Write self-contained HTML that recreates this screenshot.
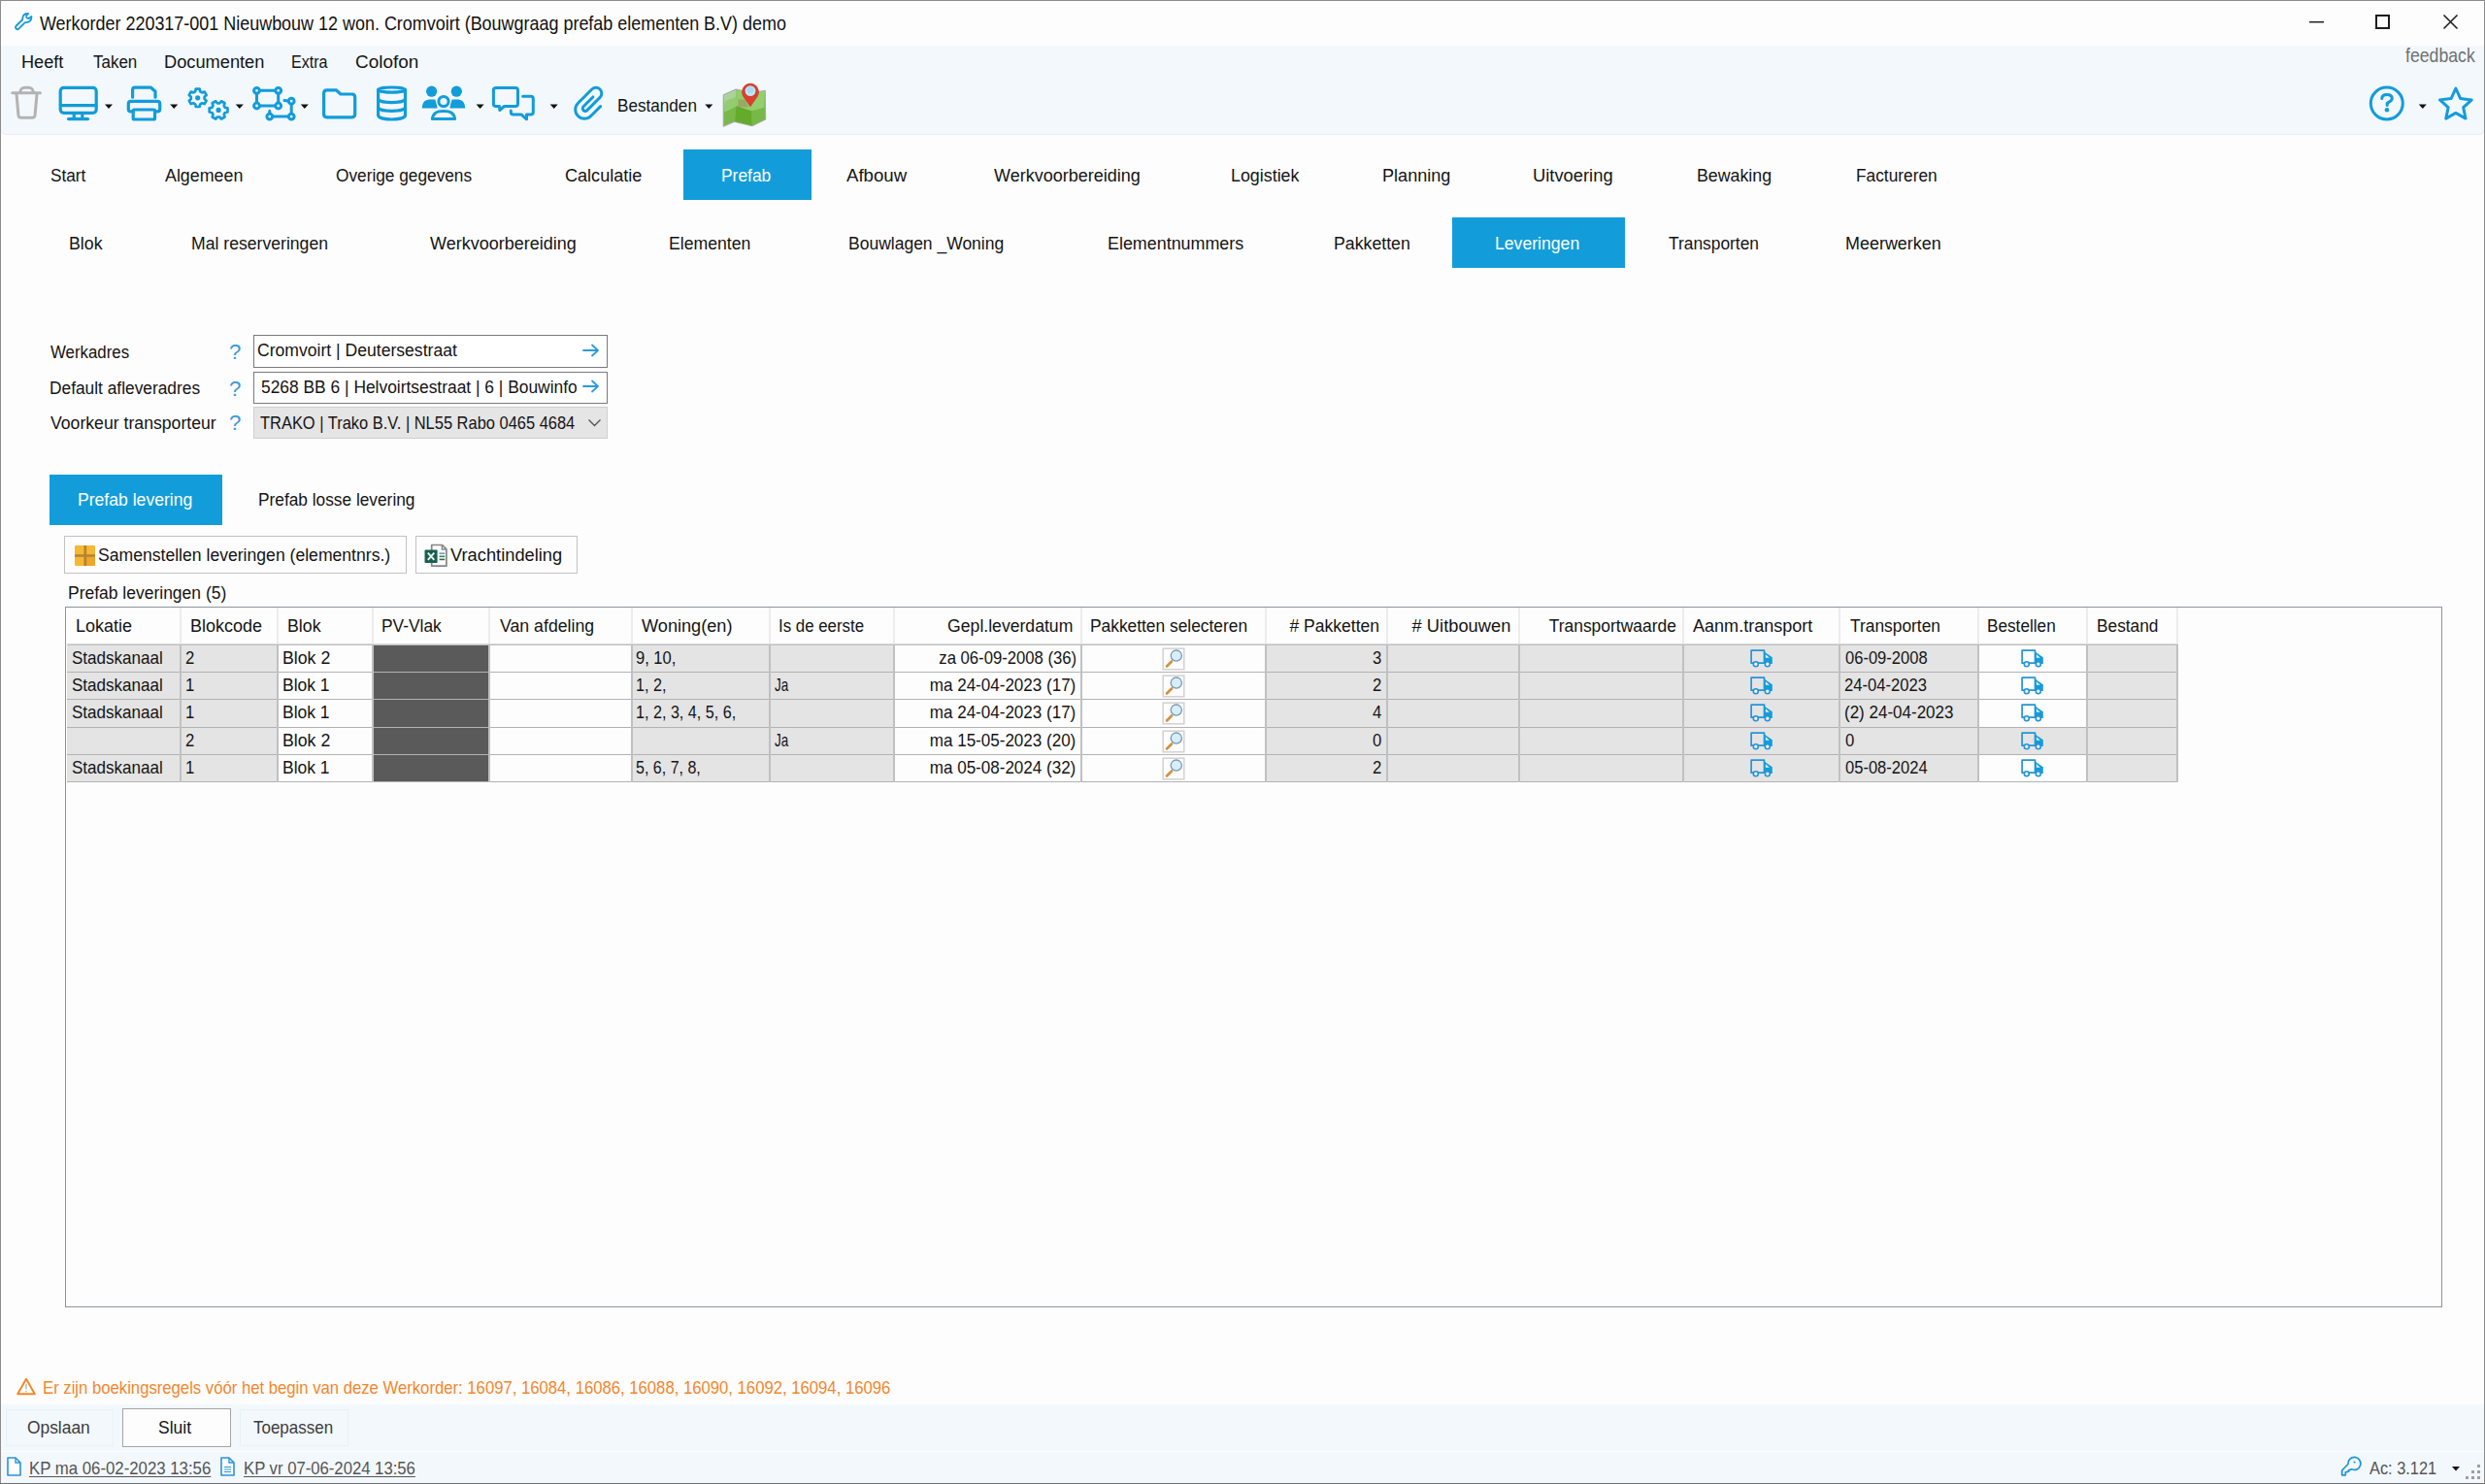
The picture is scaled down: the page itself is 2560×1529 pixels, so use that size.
<!DOCTYPE html>
<html><head><meta charset="utf-8">
<style>
*{margin:0;padding:0;box-sizing:border-box}
html,body{width:2560px;height:1529px;overflow:hidden;background:#fdfdfd;font-family:"Liberation Sans",sans-serif;color:#141414}
.a{position:absolute}
.t{position:absolute;white-space:nowrap;font-size:17.4px;line-height:20px}
svg{position:absolute;overflow:visible}
.ic{fill:none;stroke:#1a9bd8;stroke-width:3;stroke-linecap:round;stroke-linejoin:round}
.dd{position:absolute;width:0;height:0;border-left:4px solid transparent;border-right:4px solid transparent;border-top:5px solid #111}
</style></head>
<body>
<div class="a" style="left:0px;top:0px;width:2560px;height:1px;background:#8c8c8c;"></div>
<div class="a" style="left:0px;top:0px;width:1px;height:1529px;background:#8c8c8c;"></div>
<div class="a" style="left:2559px;top:0px;width:1px;height:1529px;background:#8c8c8c;"></div>
<div class="a" style="left:0px;top:1528px;width:2560px;height:1px;background:#6e6e6e;"></div>
<svg style="left:0px;top:0px" width="40" height="40" viewBox="0 0 40 40"><path d="M29.1 14 C26 13.6 23.3 15.5 23.2 19 L23.2 20.2 L16.8 26.5 C15.5 27.8 16 29.5 17.3 30 C18 30.4 18.8 30.2 19.3 29.7 L25.6 23.3 C26 23 26.4 23.1 27 23.1 C30.4 23 32.7 20.4 32.4 16.9 L29.9 18.8 C28.8 19.4 27.3 18.5 27.1 17.2 C27 16.3 27.4 15.3 29.1 14 Z" fill="none" stroke="#1a9bd8" stroke-width="1.9" stroke-linejoin="round"/></svg>
<div class="t" style="left:41.00px;top:14.04px;transform-origin:0 0;font-size:19.80px;transform:scaleX(0.9074);color:#111">Werkorder 220317-001 Nieuwbouw 12 won. Cromvoirt (Bouwgraag prefab elementen B.V) demo</div>
<div class="a" style="left:2379px;top:22px;width:15px;height:1px;background:#1a1a1a;"></div>
<div class="a" style="left:2379px;top:23px;width:15px;height:1px;background:#9a9a9a;"></div>
<div class="a" style="left:2447px;top:15px;width:15px;height:15px;border:2px solid #1e1e1e"></div>
<svg style="left:2517px;top:15px" width="15" height="15" viewBox="0 0 15 15"><path d="M0.5 0.5 L14.5 14.5 M14.5 0.5 L0.5 14.5" stroke="#1a1a1a" stroke-width="1.5" fill="none"/></svg>
<div class="a" style="left:1px;top:47px;width:2558px;height:91px;background:#f3f8fc;border-radius:0 0 5px 5px;box-shadow:0 1px 0 #ececec"></div>
<div class="t" style="left:22.05px;top:53.67px;transform-origin:0 0;font-size:19.14px;transform:scaleX(0.9489)">Heeft</div>
<div class="t" style="left:96.00px;top:53.67px;transform-origin:0 0;font-size:19.14px;transform:scaleX(0.8880)">Taken</div>
<div class="t" style="left:169.05px;top:53.67px;transform-origin:0 0;font-size:19.14px;transform:scaleX(0.9533)">Documenten</div>
<div class="t" style="left:300.16px;top:53.67px;transform-origin:0 0;font-size:19.14px;transform:scaleX(0.8409)">Extra</div>
<div class="t" style="left:366.01px;top:53.67px;transform-origin:0 0;font-size:19.14px;transform:scaleX(0.9891)">Colofon</div>
<div class="t" style="left:2478.00px;top:46.72px;transform-origin:0 0;font-size:19.58px;transform:scaleX(0.9025);color:#707070">feedback</div>
<svg style="left:0;top:0" width="2560" height="1529" viewBox="0 0 2560 1529"><g fill="none" stroke="#b3b3b3" stroke-width="3" stroke-linecap="round" stroke-linejoin="round"><path d="M12.8 95.8 L41.5 95.8"/><path d="M20.5 95.5 C21.5 91 23 90.3 25.5 90.3 L29.5 90.3 C32 90.3 33.5 91 34.5 95.5"/><path d="M17 97 L19 119 C19.3 121 20 121.3 22 121.3 L33 121.3 C35 121.3 35.7 121 36 119 L38 97"/></g><g fill="none" stroke="#129cda" stroke-width="3.2" stroke-linecap="round" stroke-linejoin="round"><rect x="62.2" y="90.3" width="37" height="26" rx="3.5"/><path d="M62.5 108.6 L99 108.6"/><path d="M76.2 117 L76.2 121.5 M84.8 117 L84.8 121.5"/><path d="M70.5 122.6 L90.5 122.6"/><path d="M136.6 100.2 L136.6 92.8 C136.6 91 137.3 90.2 139 90.2 L155.5 90.2 L160 94.2 L160 100.2"/><path d="M137 114.8 L134.5 114.8 C133.2 114.8 132.3 114 132.3 112.5 L132.3 107 C132.3 105.3 133.3 104.4 135 104.4 L162 104.4 C163.8 104.4 164.7 105.3 164.7 107 L164.7 112.5 C164.7 114 163.8 114.8 162.3 114.8 L159.5 114.8"/><rect x="137.2" y="113" width="22.3" height="10" rx="1"/><path stroke-width="2.7" d="M201.19 94.26 L201.75 91.61 L205.65 91.61 L206.21 94.26 L208.11 95.36 L210.69 94.51 L212.64 97.90 L210.61 99.70 L210.61 101.90 L212.64 103.70 L210.69 107.09 L208.11 106.24 L206.21 107.34 L205.65 109.99 L201.75 109.99 L201.19 107.34 L199.29 106.24 L196.71 107.09 L194.76 103.70 L196.79 101.90 L196.79 99.70 L194.76 97.90 L196.71 94.51 L199.29 95.36 Z"/><circle cx="203.7" cy="100.8" r="2.6" fill="#129cda" stroke="none"/><path stroke-width="2.7" d="M231.82 110.82 L234.49 111.40 L234.49 115.40 L231.82 115.98 L230.70 117.93 L231.52 120.53 L228.07 122.53 L226.23 120.51 L223.97 120.51 L222.13 122.53 L218.68 120.53 L219.50 117.93 L218.38 115.98 L215.71 115.40 L215.71 111.40 L218.38 110.82 L219.50 108.87 L218.68 106.27 L222.13 104.27 L223.97 106.29 L226.23 106.29 L228.07 104.27 L231.52 106.27 L230.70 108.87 Z"/><circle cx="225.1" cy="113.4" r="2.6" fill="#129cda" stroke="none"/><g stroke-width="3"><circle cx="264.5" cy="93.3" r="2.9"/><circle cx="286.7" cy="93.3" r="2.9"/><circle cx="264.5" cy="109" r="2.9"/><circle cx="286.7" cy="109" r="2.9"/><path d="M268 93.3 L283.2 93.3 M268 109 L283.2 109 M264.5 96.8 L264.5 105.5 M286.7 96.8 L286.7 105.5"/><circle cx="300.2" cy="104.2" r="2.9"/><circle cx="300.2" cy="120.1" r="2.9"/><circle cx="277.8" cy="120.1" r="2.9"/><path d="M300.2 107.6 L300.2 116.7 M281.2 120.1 L296.8 120.1 M277.8 116.5 L277.8 114.3 M296.5 104 L293 103.5"/></g><path d="M333.6 117.5 L333.6 96 C333.6 93.8 334.6 92.8 336.8 92.8 L346.5 92.8 L351 97 L362.5 97 C364.7 97 365.7 98 365.7 100.2 L365.7 117.6 C365.7 119.8 364.7 120.8 362.5 120.8 L336.8 120.8 C334.6 120.8 333.6 119.8 333.6 117.5 Z"/><path d="M389.6 92.6 L389.6 118.5 C389.6 121.5 396 123 403.5 123 C411 123 417.5 121.5 417.5 118.5 L417.5 92.6"/><ellipse cx="403.55" cy="92.6" rx="13.95" ry="2.6"/><path d="M389.6 101.8 C389.6 104.3 396 105.6 403.5 105.6 C411 105.6 417.5 104.3 417.5 101.8"/><path d="M389.6 110.5 C389.6 113 396 114.3 403.5 114.3 C411 114.3 417.5 113 417.5 110.5"/><circle cx="457" cy="104.5" r="5.1" stroke-width="3"/><path d="M445.3 122.5 C446.5 116.5 449.5 114.5 457 114.5 C464.5 114.5 467.5 116.5 468.6 122.5 Z" stroke-width="3"/></g><g fill="#129cda"><circle cx="444.6" cy="94.2" r="5.6"/><circle cx="470.3" cy="94.2" r="5.6"/><path d="M434.8 111.5 C435.3 104.5 438.3 102.6 443.5 102.6 L448.5 102.6 C448.5 104 450.5 109 450.5 111.5 Z"/><path d="M479.2 111.5 C478.7 104.5 475.7 102.6 470.5 102.6 L465.5 102.6 C465.5 104 463.5 109 463.5 111.5 Z"/></g><g fill="none" stroke="#129cda" stroke-width="3" stroke-linecap="round" stroke-linejoin="round"><path d="M511 109.5 C509.3 109.5 508.4 108.6 508.4 107 L508.4 93 C508.4 91.3 509.3 90.4 511 90.4 L531 90.4 C532.6 90.4 533.5 91.3 533.5 93 L533.5 107 C533.5 108.6 532.6 109.5 531 109.5 L519.5 109.5 L514.8 113.5 L514.5 109.5 Z"/><path d="M538.6 99.3 L546.8 99.3 C548.4 99.3 549.3 100.2 549.3 101.8 L549.3 115.6 C549.3 117.2 548.4 118.1 546.8 118.1 L542.5 118.1 L542.5 122.8 L537.2 118.1 L528.8 118.1 C527.2 118.1 526.3 117.2 526.3 115.6 L526.3 114"/><path transform="translate(609 106) rotate(45)" d="M-2.95 -5.6 L-2.95 8.3 A2.7 2.7 0 0 0 2.45 8.3 L2.45 -10.4 A5.9 5.9 0 0 0 -9.35 -10.4 L-9.35 9.75 A9.35 9.35 0 0 0 9.35 9.75 L9.35 -4.2"/></g><path d="M108 107.5 L116 107.5 L112 112.1 Z" fill="#111"/><path d="M175.2 107.5 L183.2 107.5 L179.2 112.1 Z" fill="#111"/><path d="M242.8 107.5 L250.8 107.5 L246.8 112.1 Z" fill="#111"/><path d="M309.8 107.5 L317.8 107.5 L313.8 112.1 Z" fill="#111"/><path d="M490.6 107.5 L498.6 107.5 L494.6 112.1 Z" fill="#111"/><path d="M566.7 107.5 L574.7 107.5 L570.7 112.1 Z" fill="#111"/><path d="M726.3 107.5 L734.3 107.5 L730.3 112.1 Z" fill="#111"/><path d="M2491.8 107.5 L2499.8 107.5 L2495.8 112.1 Z" fill="#111"/><g><path d="M745.3 97.8 L758.2 92.1 L774 95.8 L788.2 93.3 L788.6 122.9 L774.8 129.7 L757 125.3 L745.3 130.1 Z" fill="#79b84a" stroke="#a9a9a9" stroke-width="1.2" stroke-linejoin="round"/><path d="M745.6 98 L758.2 92.4 L758.4 109.3 L746.6 115.2 Z" fill="#a9d39b"/><path d="M746.8 104 L758.2 100 L758.6 109.2 L746.6 115.2 Z" fill="#93cd70"/><path d="M758.2 92.4 L774 96 L774.2 114.4 L758.6 109.2 Z" fill="#92cd6d"/><path d="M760.3 102.6 L768 102.6 L771 110.5 L760.3 110 Z" fill="#98a962"/><path d="M774 96 L788 93.5 L787.2 111.1 L774.2 114.4 Z" fill="#93cf6e"/><path d="M758.6 109.2 L774.2 114.4 L774.8 129.5 L757.2 125.2 Z" fill="#66aa2c"/><path d="M774.2 114.4 L787.2 111.1 L788.4 122.7 L774.8 129.5 Z" fill="#78b849"/><path d="M773 110.2 L765.5 99.5 A8.9 8.9 0 1 1 780.5 99.5 Z" fill="#d8402f"/><circle cx="773" cy="93.6" r="5.4" fill="#bfe6f7"/><circle cx="773" cy="92.5" r="3.5" fill="#a8dcf5"/></g><g fill="none" stroke="#129cda" stroke-width="3"><circle cx="2458.8" cy="106.5" r="16.5"/></g><path d="M2453.8 101.6 C2453.8 98.8 2456 97.6 2459 97.6 C2462.2 97.6 2464.3 99 2464.3 101.6 C2464.3 104 2461.5 104.8 2459.2 106.2 L2459.2 108.4" fill="none" stroke="#129cda" stroke-width="3" stroke-linecap="round" stroke-linejoin="round"/><circle cx="2459" cy="113.3" r="2.3" fill="#129cda"/><path d="M2529.90 91.00 L2534.72 101.57 L2546.26 102.88 L2537.70 110.73 L2540.01 122.12 L2529.90 116.40 L2519.79 122.12 L2522.10 110.73 L2513.54 102.88 L2525.08 101.57 Z" fill="none" stroke="#129cda" stroke-width="3" stroke-linejoin="round"/></svg>
<div class="t" style="left:635.60px;top:98.97px;transform-origin:0 0;font-size:19.14px;transform:scaleX(0.8956)">Bestanden</div>
<div class="a" style="left:704px;top:154px;width:132px;height:52px;background:#129dda;"></div>
<div class="t" style="left:51.90px;top:171.47px;transform-origin:0 0;font-size:19.14px;transform:scaleX(0.9000)">Start</div>
<div class="t" style="left:170.00px;top:171.47px;transform-origin:0 0;font-size:19.14px;transform:scaleX(0.9329)">Algemeen</div>
<div class="t" style="left:345.50px;top:171.47px;transform-origin:0 0;font-size:19.14px;transform:scaleX(0.9026)">Overige gegevens</div>
<div class="t" style="left:581.55px;top:171.47px;transform-origin:0 0;font-size:19.14px;transform:scaleX(0.9451)">Calculatie</div>
<div class="t" style="left:743.09px;top:171.47px;transform-origin:0 0;font-size:19.14px;transform:scaleX(0.9091);color:#fff">Prefab</div>
<div class="t" style="left:871.90px;top:171.47px;transform-origin:0 0;font-size:19.14px;transform:scaleX(0.9734)">Afbouw</div>
<div class="t" style="left:1023.80px;top:171.47px;transform-origin:0 0;font-size:19.14px;transform:scaleX(0.9409)">Werkvoorbereiding</div>
<div class="t" style="left:1267.97px;top:171.47px;transform-origin:0 0;font-size:19.14px;transform:scaleX(0.9333)">Logistiek</div>
<div class="t" style="left:1423.65px;top:171.47px;transform-origin:0 0;font-size:19.14px;transform:scaleX(0.9452)">Planning</div>
<div class="t" style="left:1579.04px;top:171.47px;transform-origin:0 0;font-size:19.14px;transform:scaleX(0.9595)">Uitvoering</div>
<div class="t" style="left:1747.57px;top:171.47px;transform-origin:0 0;font-size:19.14px;transform:scaleX(0.9296)">Bewaking</div>
<div class="t" style="left:1912.30px;top:171.47px;transform-origin:0 0;font-size:19.14px;transform:scaleX(0.9044)">Factureren</div>
<div class="a" style="left:1496px;top:224px;width:178px;height:52px;background:#129dda;"></div>
<div class="t" style="left:70.67px;top:241.47px;transform-origin:0 0;font-size:19.14px;transform:scaleX(0.9278)">Blok</div>
<div class="t" style="left:197.38px;top:241.47px;transform-origin:0 0;font-size:19.14px;transform:scaleX(0.9212)">Mal reserveringen</div>
<div class="t" style="left:443.00px;top:241.47px;transform-origin:0 0;font-size:19.14px;transform:scaleX(0.9409)">Werkvoorbereiding</div>
<div class="t" style="left:688.58px;top:241.47px;transform-origin:0 0;font-size:19.14px;transform:scaleX(0.9222)">Elementen</div>
<div class="t" style="left:874.08px;top:241.47px;transform-origin:0 0;font-size:19.14px;transform:scaleX(0.9150)">Bouwlagen _Woning</div>
<div class="t" style="left:1141.36px;top:241.47px;transform-origin:0 0;font-size:19.14px;transform:scaleX(0.9356)">Elementnummers</div>
<div class="t" style="left:1374.07px;top:241.47px;transform-origin:0 0;font-size:19.14px;transform:scaleX(0.9265)">Pakketten</div>
<div class="t" style="left:1540.38px;top:241.47px;transform-origin:0 0;font-size:19.14px;transform:scaleX(0.9215);color:#fff">Leveringen</div>
<div class="t" style="left:1719.30px;top:241.47px;transform-origin:0 0;font-size:19.14px;transform:scaleX(0.9078)">Transporten</div>
<div class="t" style="left:1901.36px;top:241.47px;transform-origin:0 0;font-size:19.14px;transform:scaleX(0.9388)">Meerwerken</div>
<div class="t" style="left:52.00px;top:352.77px;transform-origin:0 0;font-size:19.14px;transform:scaleX(0.8804)">Werkadres</div>
<div class="t" style="left:51.09px;top:389.97px;transform-origin:0 0;font-size:19.14px;transform:scaleX(0.9059)">Default afleveradres</div>
<div class="t" style="left:52.00px;top:425.87px;transform-origin:0 0;font-size:19.14px;transform:scaleX(0.9227)">Voorkeur transporteur</div>
<div class="t" style="left:235.56px;top:353.37px;transform-origin:0 0;font-size:21.45px;transform:scaleX(1.0364);color:#3d9ad6">?</div>
<div class="t" style="left:235.56px;top:390.57px;transform-origin:0 0;font-size:21.45px;transform:scaleX(1.0364);color:#3d9ad6">?</div>
<div class="t" style="left:235.56px;top:426.47px;transform-origin:0 0;font-size:21.45px;transform:scaleX(1.0364);color:#3d9ad6">?</div>
<div class="a" style="left:261px;top:345px;width:365px;height:34px;border:1px solid #7a7a7a;background:#fff"></div>
<div class="a" style="left:261px;top:383px;width:365px;height:33px;border:1px solid #7a7a7a;background:#fff"></div>
<div class="a" style="left:261px;top:419px;width:365px;height:33px;border:1px solid #cfcfcf;background:#e5e5e5"></div>
<div class="t" style="left:264.68px;top:351.47px;transform-origin:0 0;font-size:19.14px;transform:scaleX(0.9193)">Cromvoirt | Deutersestraat</div>
<div class="a" style="left:270px;top:386px;width:324px;height:28px;overflow:hidden"><div class="t" style="left:-0.91px;top:2.57px;transform-origin:0 0;font-size:19.14px;transform:scaleX(0.9091)">5268 BB 6 | Helvoirtsestraat | 6 | Bouwinfo</div>
</div>
<div class="t" style="left:267.60px;top:426.17px;transform-origin:0 0;font-size:18.26px;transform:scaleX(0.9011)">TRAKO | Trako B.V. | NL55 Rabo 0465 4684</div>
<svg style="left:600.5px;top:355px" width="16" height="12" viewBox="0 0 16 12"><path d="M0 6 L15 6 M9 0.5 L15 6 L9 11.5" fill="none" stroke="#2b9bdb" stroke-width="1.8" stroke-linecap="round" stroke-linejoin="round"/></svg>
<svg style="left:600.5px;top:391.5px" width="16" height="12" viewBox="0 0 16 12"><path d="M0 6 L15 6 M9 0.5 L15 6 L9 11.5" fill="none" stroke="#2b9bdb" stroke-width="1.8" stroke-linecap="round" stroke-linejoin="round"/></svg>
<svg style="left:606px;top:431.5px" width="13" height="8" viewBox="0 0 13 8"><path d="M0.5 0.5 L6.5 6.5 L12.5 0.5" fill="none" stroke="#555" stroke-width="1.4"/></svg>
<div class="a" style="left:51px;top:489px;width:178px;height:52px;background:#129dda;"></div>
<div class="t" style="left:79.68px;top:505.27px;transform-origin:0 0;font-size:19.14px;transform:scaleX(0.9197);color:#fff">Prefab levering</div>
<div class="t" style="left:266.10px;top:505.27px;transform-origin:0 0;font-size:19.14px;transform:scaleX(0.9040)">Prefab losse levering</div>
<div class="a" style="left:66px;top:552px;width:353px;height:39px;border:1px solid #c2c2c2;background:#fdfdfd"></div>
<div class="a" style="left:428px;top:552px;width:167px;height:39px;border:1px solid #c2c2c2;background:#fdfdfd"></div>
<svg style="left:76.8px;top:561.6px" width="21" height="21" viewBox="0 0 21 21"><rect x="0" y="0" width="21" height="21" rx="1" fill="#f4b834"/><path d="M12 12 L21 12 L21 21 L12 21 Z" fill="#eca72c"/><path d="M10.8 0 L10.8 21 M0 10.5 L21 10.5" stroke="#b5832f" stroke-width="2.7"/></svg>
<svg style="left:436.5px;top:559.5px" width="25" height="25" viewBox="0 0 25 25"><path d="M7.7 1.5 L18.6 1.5 L22.9 5.8 L22.9 23.1 L7.7 23.1 Z" fill="#fafcfe" stroke="#868686" stroke-width="1.7" stroke-linejoin="round"/><path d="M18.4 1.8 L18.4 5.9 L22.6 5.9" fill="none" stroke="#868686" stroke-width="1.5"/><path d="M15.6 10.2 L21.2 10.2" stroke="#6a9fbf" stroke-width="1.6"/><path d="M15.6 13.3 L21.2 13.3" stroke="#2e8b57" stroke-width="1.6"/><path d="M15.6 16.4 L21.2 16.4" stroke="#3d6b4a" stroke-width="1.6"/><rect x="0.5" y="6.5" width="13.1" height="13.5" rx="1" fill="#18604f"/><path d="M3.8 9.6 L10.3 16.9 M10.3 9.6 L3.8 16.9" stroke="#eef6f0" stroke-width="1.9"/></svg>
<div class="t" style="left:101.38px;top:561.77px;transform-origin:0 0;font-size:19.14px;transform:scaleX(0.9199)">Samenstellen leveringen (elementnrs.)</div>
<div class="t" style="left:463.70px;top:561.77px;transform-origin:0 0;font-size:19.14px;transform:scaleX(0.9558)">Vrachtindeling</div>
<div class="t" style="left:70.49px;top:601.07px;transform-origin:0 0;font-size:19.14px;transform:scaleX(0.9141)">Prefab leveringen (5)</div>
<div class="a" style="left:67px;top:625px;width:2449px;height:722px;border:1px solid #8f949a;background:#fdfdfd"></div>
<div class="a" style="left:185px;top:626px;width:2px;height:37px;background:#ececee;"></div>
<div class="a" style="left:285px;top:626px;width:2px;height:37px;background:#ececee;"></div>
<div class="a" style="left:383px;top:626px;width:2px;height:37px;background:#ececee;"></div>
<div class="a" style="left:503px;top:626px;width:2px;height:37px;background:#ececee;"></div>
<div class="a" style="left:650px;top:626px;width:2px;height:37px;background:#ececee;"></div>
<div class="a" style="left:792px;top:626px;width:2px;height:37px;background:#ececee;"></div>
<div class="a" style="left:920px;top:626px;width:2px;height:37px;background:#ececee;"></div>
<div class="a" style="left:1113px;top:626px;width:2px;height:37px;background:#ececee;"></div>
<div class="a" style="left:1303px;top:626px;width:2px;height:37px;background:#ececee;"></div>
<div class="a" style="left:1428px;top:626px;width:2px;height:37px;background:#ececee;"></div>
<div class="a" style="left:1564px;top:626px;width:2px;height:37px;background:#ececee;"></div>
<div class="a" style="left:1733px;top:626px;width:2px;height:37px;background:#ececee;"></div>
<div class="a" style="left:1894px;top:626px;width:2px;height:37px;background:#ececee;"></div>
<div class="a" style="left:2037px;top:626px;width:2px;height:37px;background:#ececee;"></div>
<div class="a" style="left:2149px;top:626px;width:2px;height:37px;background:#ececee;"></div>
<div class="a" style="left:2242px;top:626px;width:2px;height:37px;background:#ececee;"></div>
<div class="a" style="left:69px;top:663px;width:2175px;height:1px;background:#dadada;"></div>
<div class="a" style="left:69px;top:664px;width:2175px;height:1px;background:#c0c0c0;"></div>
<div class="a" style="left:69px;top:665px;width:117px;height:27px;background:#e4e4e4;"></div>
<div class="a" style="left:186px;top:665px;width:100px;height:27px;background:#e4e4e4;"></div>
<div class="a" style="left:286px;top:665px;width:98px;height:27px;background:#fdfdfd;"></div>
<div class="a" style="left:384px;top:665px;width:120px;height:27px;background:#5a5a5a;"></div>
<div class="a" style="left:504px;top:665px;width:147px;height:27px;background:#fdfdfd;"></div>
<div class="a" style="left:651px;top:665px;width:142px;height:27px;background:#e4e4e4;"></div>
<div class="a" style="left:793px;top:665px;width:128px;height:27px;background:#e4e4e4;"></div>
<div class="a" style="left:921px;top:665px;width:193px;height:27px;background:#fdfdfd;"></div>
<div class="a" style="left:1114px;top:665px;width:190px;height:27px;background:#fdfdfd;"></div>
<div class="a" style="left:1304px;top:665px;width:125px;height:27px;background:#e4e4e4;"></div>
<div class="a" style="left:1429px;top:665px;width:136px;height:27px;background:#e4e4e4;"></div>
<div class="a" style="left:1565px;top:665px;width:169px;height:27px;background:#e4e4e4;"></div>
<div class="a" style="left:1734px;top:665px;width:161px;height:27px;background:#e4e4e4;"></div>
<div class="a" style="left:1895px;top:665px;width:143px;height:27px;background:#e4e4e4;"></div>
<div class="a" style="left:2038px;top:665px;width:112px;height:27px;background:#fdfdfd;"></div>
<div class="a" style="left:2150px;top:665px;width:93px;height:27px;background:#e4e4e4;"></div>
<div class="a" style="left:69px;top:692px;width:2175px;height:1px;background:#b2b2b2;"></div>
<div class="a" style="left:69px;top:693px;width:117px;height:27px;background:#e4e4e4;"></div>
<div class="a" style="left:186px;top:693px;width:100px;height:27px;background:#e4e4e4;"></div>
<div class="a" style="left:286px;top:693px;width:98px;height:27px;background:#fdfdfd;"></div>
<div class="a" style="left:384px;top:693px;width:120px;height:27px;background:#5a5a5a;"></div>
<div class="a" style="left:504px;top:693px;width:147px;height:27px;background:#fdfdfd;"></div>
<div class="a" style="left:651px;top:693px;width:142px;height:27px;background:#e4e4e4;"></div>
<div class="a" style="left:793px;top:693px;width:128px;height:27px;background:#e4e4e4;"></div>
<div class="a" style="left:921px;top:693px;width:193px;height:27px;background:#fdfdfd;"></div>
<div class="a" style="left:1114px;top:693px;width:190px;height:27px;background:#fdfdfd;"></div>
<div class="a" style="left:1304px;top:693px;width:125px;height:27px;background:#e4e4e4;"></div>
<div class="a" style="left:1429px;top:693px;width:136px;height:27px;background:#e4e4e4;"></div>
<div class="a" style="left:1565px;top:693px;width:169px;height:27px;background:#e4e4e4;"></div>
<div class="a" style="left:1734px;top:693px;width:161px;height:27px;background:#e4e4e4;"></div>
<div class="a" style="left:1895px;top:693px;width:143px;height:27px;background:#e4e4e4;"></div>
<div class="a" style="left:2038px;top:693px;width:112px;height:27px;background:#fdfdfd;"></div>
<div class="a" style="left:2150px;top:693px;width:93px;height:27px;background:#e4e4e4;"></div>
<div class="a" style="left:69px;top:720px;width:2175px;height:1px;background:#b2b2b2;"></div>
<div class="a" style="left:69px;top:721px;width:117px;height:28px;background:#e4e4e4;"></div>
<div class="a" style="left:186px;top:721px;width:100px;height:28px;background:#e4e4e4;"></div>
<div class="a" style="left:286px;top:721px;width:98px;height:28px;background:#fdfdfd;"></div>
<div class="a" style="left:384px;top:721px;width:120px;height:28px;background:#5a5a5a;"></div>
<div class="a" style="left:504px;top:721px;width:147px;height:28px;background:#fdfdfd;"></div>
<div class="a" style="left:651px;top:721px;width:142px;height:28px;background:#e4e4e4;"></div>
<div class="a" style="left:793px;top:721px;width:128px;height:28px;background:#e4e4e4;"></div>
<div class="a" style="left:921px;top:721px;width:193px;height:28px;background:#fdfdfd;"></div>
<div class="a" style="left:1114px;top:721px;width:190px;height:28px;background:#fdfdfd;"></div>
<div class="a" style="left:1304px;top:721px;width:125px;height:28px;background:#e4e4e4;"></div>
<div class="a" style="left:1429px;top:721px;width:136px;height:28px;background:#e4e4e4;"></div>
<div class="a" style="left:1565px;top:721px;width:169px;height:28px;background:#e4e4e4;"></div>
<div class="a" style="left:1734px;top:721px;width:161px;height:28px;background:#e4e4e4;"></div>
<div class="a" style="left:1895px;top:721px;width:143px;height:28px;background:#e4e4e4;"></div>
<div class="a" style="left:2038px;top:721px;width:112px;height:28px;background:#fdfdfd;"></div>
<div class="a" style="left:2150px;top:721px;width:93px;height:28px;background:#e4e4e4;"></div>
<div class="a" style="left:69px;top:749px;width:2175px;height:1px;background:#b2b2b2;"></div>
<div class="a" style="left:69px;top:750px;width:117px;height:27px;background:#e4e4e4;"></div>
<div class="a" style="left:186px;top:750px;width:100px;height:27px;background:#e4e4e4;"></div>
<div class="a" style="left:286px;top:750px;width:98px;height:27px;background:#fdfdfd;"></div>
<div class="a" style="left:384px;top:750px;width:120px;height:27px;background:#5a5a5a;"></div>
<div class="a" style="left:504px;top:750px;width:147px;height:27px;background:#fdfdfd;"></div>
<div class="a" style="left:651px;top:750px;width:142px;height:27px;background:#e4e4e4;"></div>
<div class="a" style="left:793px;top:750px;width:128px;height:27px;background:#e4e4e4;"></div>
<div class="a" style="left:921px;top:750px;width:193px;height:27px;background:#fdfdfd;"></div>
<div class="a" style="left:1114px;top:750px;width:190px;height:27px;background:#fdfdfd;"></div>
<div class="a" style="left:1304px;top:750px;width:125px;height:27px;background:#e4e4e4;"></div>
<div class="a" style="left:1429px;top:750px;width:136px;height:27px;background:#e4e4e4;"></div>
<div class="a" style="left:1565px;top:750px;width:169px;height:27px;background:#e4e4e4;"></div>
<div class="a" style="left:1734px;top:750px;width:161px;height:27px;background:#e4e4e4;"></div>
<div class="a" style="left:1895px;top:750px;width:143px;height:27px;background:#e4e4e4;"></div>
<div class="a" style="left:2038px;top:750px;width:112px;height:27px;background:#e4e4e4;"></div>
<div class="a" style="left:2150px;top:750px;width:93px;height:27px;background:#e4e4e4;"></div>
<div class="a" style="left:69px;top:777px;width:2175px;height:1px;background:#b2b2b2;"></div>
<div class="a" style="left:69px;top:778px;width:117px;height:27px;background:#e4e4e4;"></div>
<div class="a" style="left:186px;top:778px;width:100px;height:27px;background:#e4e4e4;"></div>
<div class="a" style="left:286px;top:778px;width:98px;height:27px;background:#fdfdfd;"></div>
<div class="a" style="left:384px;top:778px;width:120px;height:27px;background:#5a5a5a;"></div>
<div class="a" style="left:504px;top:778px;width:147px;height:27px;background:#fdfdfd;"></div>
<div class="a" style="left:651px;top:778px;width:142px;height:27px;background:#e4e4e4;"></div>
<div class="a" style="left:793px;top:778px;width:128px;height:27px;background:#e4e4e4;"></div>
<div class="a" style="left:921px;top:778px;width:193px;height:27px;background:#fdfdfd;"></div>
<div class="a" style="left:1114px;top:778px;width:190px;height:27px;background:#fdfdfd;"></div>
<div class="a" style="left:1304px;top:778px;width:125px;height:27px;background:#e4e4e4;"></div>
<div class="a" style="left:1429px;top:778px;width:136px;height:27px;background:#e4e4e4;"></div>
<div class="a" style="left:1565px;top:778px;width:169px;height:27px;background:#e4e4e4;"></div>
<div class="a" style="left:1734px;top:778px;width:161px;height:27px;background:#e4e4e4;"></div>
<div class="a" style="left:1895px;top:778px;width:143px;height:27px;background:#e4e4e4;"></div>
<div class="a" style="left:2038px;top:778px;width:112px;height:27px;background:#fdfdfd;"></div>
<div class="a" style="left:2150px;top:778px;width:93px;height:27px;background:#e4e4e4;"></div>
<div class="a" style="left:69px;top:805px;width:2175px;height:1px;background:#b2b2b2;"></div>
<div class="a" style="left:185px;top:664px;width:2px;height:142px;background:#bec1c3;"></div>
<div class="a" style="left:285px;top:664px;width:2px;height:142px;background:#bec1c3;"></div>
<div class="a" style="left:383px;top:664px;width:2px;height:142px;background:#bec1c3;"></div>
<div class="a" style="left:503px;top:664px;width:2px;height:142px;background:#bec1c3;"></div>
<div class="a" style="left:650px;top:664px;width:2px;height:142px;background:#bec1c3;"></div>
<div class="a" style="left:792px;top:664px;width:2px;height:142px;background:#bec1c3;"></div>
<div class="a" style="left:920px;top:664px;width:2px;height:142px;background:#bec1c3;"></div>
<div class="a" style="left:1113px;top:664px;width:2px;height:142px;background:#bec1c3;"></div>
<div class="a" style="left:1303px;top:664px;width:2px;height:142px;background:#bec1c3;"></div>
<div class="a" style="left:1428px;top:664px;width:2px;height:142px;background:#bec1c3;"></div>
<div class="a" style="left:1564px;top:664px;width:2px;height:142px;background:#bec1c3;"></div>
<div class="a" style="left:1733px;top:664px;width:2px;height:142px;background:#bec1c3;"></div>
<div class="a" style="left:1894px;top:664px;width:2px;height:142px;background:#bec1c3;"></div>
<div class="a" style="left:2037px;top:664px;width:2px;height:142px;background:#bec1c3;"></div>
<div class="a" style="left:2149px;top:664px;width:2px;height:142px;background:#bec1c3;"></div>
<div class="a" style="left:2242px;top:664px;width:2px;height:142px;background:#bec1c3;"></div>
<div class="t" style="left:77.86px;top:635.37px;transform-origin:0 0;font-size:19.14px;transform:scaleX(0.9417)">Lokatie</div>
<div class="t" style="left:196.06px;top:635.37px;transform-origin:0 0;font-size:19.14px;transform:scaleX(0.9403)">Blokcode</div>
<div class="t" style="left:295.67px;top:635.37px;transform-origin:0 0;font-size:19.14px;transform:scaleX(0.9278)">Blok</div>
<div class="t" style="left:393.09px;top:635.37px;transform-origin:0 0;font-size:19.14px;transform:scaleX(0.9075)">PV-Vlak</div>
<div class="t" style="left:514.60px;top:635.37px;transform-origin:0 0;font-size:19.14px;transform:scaleX(0.9260)">Van afdeling</div>
<div class="t" style="left:661.20px;top:635.37px;transform-origin:0 0;font-size:19.14px;transform:scaleX(0.9490)">Woning(en)</div>
<div class="t" style="left:802.12px;top:635.37px;transform-origin:0 0;font-size:19.14px;transform:scaleX(0.8816)">Is de eerste</div>
<div class="t" style="right:1454.90px;top:635.37px;transform-origin:100% 0;font-size:19.14px;transform:scaleX(0.9209)">Gepl.leverdatum</div>
<div class="t" style="left:1123.19px;top:635.37px;transform-origin:0 0;font-size:19.14px;transform:scaleX(0.9073)">Pakketten selecteren</div>
<div class="t" style="right:1139.07px;top:635.37px;transform-origin:100% 0;font-size:19.14px;transform:scaleX(0.9170)"># Pakketten</div>
<div class="t" style="right:1003.39px;top:635.37px;transform-origin:100% 0;font-size:19.14px;transform:scaleX(0.9566)"># Uitbouwen</div>
<div class="t" style="right:833.22px;top:635.37px;transform-origin:100% 0;font-size:19.14px;transform:scaleX(0.9119)">Transportwaarde</div>
<div class="t" style="left:1744.00px;top:635.37px;transform-origin:0 0;font-size:19.14px;transform:scaleX(0.9435)">Aanm.transport</div>
<div class="t" style="left:1905.80px;top:635.37px;transform-origin:0 0;font-size:19.14px;transform:scaleX(0.9078)">Transporten</div>
<div class="t" style="left:2047.30px;top:635.37px;transform-origin:0 0;font-size:19.14px;transform:scaleX(0.8987)">Bestellen</div>
<div class="t" style="left:2160.10px;top:635.37px;transform-origin:0 0;font-size:19.14px;transform:scaleX(0.9044)">Bestand</div>
<div class="t" style="left:73.57px;top:667.73px;transform-origin:0 0;font-size:18.37px;transform:scaleX(0.9273)">Stadskanaal</div>
<div class="t" style="left:190.69px;top:667.73px;transform-origin:0 0;font-size:18.37px;transform:scaleX(0.9091)">2</div>
<div class="t" style="left:290.83px;top:667.73px;transform-origin:0 0;font-size:18.37px;transform:scaleX(0.9653)">Blok 2</div>
<div class="t" style="left:655.10px;top:667.73px;transform-origin:0 0;font-size:18.37px;transform:scaleX(0.9000)">9, 10,</div>
<div class="t" style="right:1450.95px;top:667.73px;transform-origin:100% 0;font-size:18.37px;transform:scaleX(0.9084)">za 06-09-2008 (36)</div>
<svg style="left:1197px;top:667px" width="24" height="24" viewBox="0 0 24 24"><rect x="1.2" y="1.2" width="21.6" height="21.6" fill="#fdfdfd" stroke="#d2d2d2" stroke-width="1.5"/><path d="M5 19.5 L10 14.5" stroke="#d4903e" stroke-width="2.6" stroke-linecap="round"/><circle cx="14.8" cy="8.6" r="5.6" fill="#d6eef9" stroke="#7d98ad" stroke-width="1.3"/></svg>
<div class="t" style="right:1136.30px;top:667.73px;transform-origin:100% 0;font-size:18.37px;transform:scaleX(0.9091)">3</div>
<svg style="left:1803px;top:668.5px" width="24" height="19" viewBox="0 0 24 19"><path d="M1.1 14.2 L1.1 1.2 L14.5 1.2 L14.5 14.2 Z" fill="none" stroke="#2594d8" stroke-width="1.7" stroke-linejoin="round"/><path d="M14.2 1.3 L15.8 3.4 L22.8 8.2 L22.8 15 L14.2 15 Z" fill="#129cda"/><path d="M15.9 5.2 L19.8 8.8 L15.9 8.8 Z" fill="#e8f4fb"/><circle cx="5.8" cy="15.3" r="2.5" fill="#f4f4f4" stroke="#2594d8" stroke-width="1.6"/><circle cx="17.8" cy="15.3" r="2.5" fill="#f4f4f4" stroke="#2594d8" stroke-width="1.6"/></svg>
<div class="t" style="left:1901.00px;top:667.73px;transform-origin:0 0;font-size:18.37px;transform:scaleX(0.9011)">06-09-2008</div>
<svg style="left:2082px;top:668.5px" width="24" height="19" viewBox="0 0 24 19"><path d="M1.1 14.2 L1.1 1.2 L14.5 1.2 L14.5 14.2 Z" fill="none" stroke="#2594d8" stroke-width="1.7" stroke-linejoin="round"/><path d="M14.2 1.3 L15.8 3.4 L22.8 8.2 L22.8 15 L14.2 15 Z" fill="#129cda"/><path d="M15.9 5.2 L19.8 8.8 L15.9 8.8 Z" fill="#e8f4fb"/><circle cx="5.8" cy="15.3" r="2.5" fill="#f4f4f4" stroke="#2594d8" stroke-width="1.6"/><circle cx="17.8" cy="15.3" r="2.5" fill="#f4f4f4" stroke="#2594d8" stroke-width="1.6"/></svg>
<div class="t" style="left:73.57px;top:695.73px;transform-origin:0 0;font-size:18.37px;transform:scaleX(0.9273)">Stadskanaal</div>
<div class="t" style="left:190.69px;top:695.73px;transform-origin:0 0;font-size:18.37px;transform:scaleX(0.9091)">1</div>
<div class="t" style="left:290.85px;top:695.73px;transform-origin:0 0;font-size:18.37px;transform:scaleX(0.9510)">Blok 1</div>
<div class="t" style="left:655.12px;top:695.73px;transform-origin:0 0;font-size:18.37px;transform:scaleX(0.8788)">1, 2,</div>
<div class="t" style="left:798.20px;top:695.73px;transform-origin:0 0;font-size:18.37px;transform:scaleX(0.7300)">Ja</div>
<div class="t" style="right:1451.74px;top:695.73px;transform-origin:100% 0;font-size:18.37px;transform:scaleX(0.9273)">ma 24-04-2023 (17)</div>
<svg style="left:1197px;top:695px" width="24" height="24" viewBox="0 0 24 24"><rect x="1.2" y="1.2" width="21.6" height="21.6" fill="#fdfdfd" stroke="#d2d2d2" stroke-width="1.5"/><path d="M5 19.5 L10 14.5" stroke="#d4903e" stroke-width="2.6" stroke-linecap="round"/><circle cx="14.8" cy="8.6" r="5.6" fill="#d6eef9" stroke="#7d98ad" stroke-width="1.3"/></svg>
<div class="t" style="right:1136.30px;top:695.73px;transform-origin:100% 0;font-size:18.37px;transform:scaleX(0.9091)">2</div>
<svg style="left:1803px;top:696.5px" width="24" height="19" viewBox="0 0 24 19"><path d="M1.1 14.2 L1.1 1.2 L14.5 1.2 L14.5 14.2 Z" fill="none" stroke="#2594d8" stroke-width="1.7" stroke-linejoin="round"/><path d="M14.2 1.3 L15.8 3.4 L22.8 8.2 L22.8 15 L14.2 15 Z" fill="#129cda"/><path d="M15.9 5.2 L19.8 8.8 L15.9 8.8 Z" fill="#e8f4fb"/><circle cx="5.8" cy="15.3" r="2.5" fill="#f4f4f4" stroke="#2594d8" stroke-width="1.6"/><circle cx="17.8" cy="15.3" r="2.5" fill="#f4f4f4" stroke="#2594d8" stroke-width="1.6"/></svg>
<div class="t" style="left:1900.09px;top:695.73px;transform-origin:0 0;font-size:18.37px;transform:scaleX(0.9054)">24-04-2023</div>
<svg style="left:2082px;top:696.5px" width="24" height="19" viewBox="0 0 24 19"><path d="M1.1 14.2 L1.1 1.2 L14.5 1.2 L14.5 14.2 Z" fill="none" stroke="#2594d8" stroke-width="1.7" stroke-linejoin="round"/><path d="M14.2 1.3 L15.8 3.4 L22.8 8.2 L22.8 15 L14.2 15 Z" fill="#129cda"/><path d="M15.9 5.2 L19.8 8.8 L15.9 8.8 Z" fill="#e8f4fb"/><circle cx="5.8" cy="15.3" r="2.5" fill="#f4f4f4" stroke="#2594d8" stroke-width="1.6"/><circle cx="17.8" cy="15.3" r="2.5" fill="#f4f4f4" stroke="#2594d8" stroke-width="1.6"/></svg>
<div class="t" style="left:73.57px;top:723.73px;transform-origin:0 0;font-size:18.37px;transform:scaleX(0.9273)">Stadskanaal</div>
<div class="t" style="left:190.69px;top:723.73px;transform-origin:0 0;font-size:18.37px;transform:scaleX(0.9091)">1</div>
<div class="t" style="left:290.85px;top:723.73px;transform-origin:0 0;font-size:18.37px;transform:scaleX(0.9510)">Blok 1</div>
<div class="t" style="left:655.08px;top:724.00px;transform-origin:0 0;font-size:17.60px;transform:scaleX(0.9173)">1, 2, 3, 4, 5, 6,</div>
<div class="t" style="right:1451.74px;top:723.73px;transform-origin:100% 0;font-size:18.37px;transform:scaleX(0.9273)">ma 24-04-2023 (17)</div>
<svg style="left:1197px;top:723px" width="24" height="24" viewBox="0 0 24 24"><rect x="1.2" y="1.2" width="21.6" height="21.6" fill="#fdfdfd" stroke="#d2d2d2" stroke-width="1.5"/><path d="M5 19.5 L10 14.5" stroke="#d4903e" stroke-width="2.6" stroke-linecap="round"/><circle cx="14.8" cy="8.6" r="5.6" fill="#d6eef9" stroke="#7d98ad" stroke-width="1.3"/></svg>
<div class="t" style="right:1136.30px;top:723.73px;transform-origin:100% 0;font-size:18.37px;transform:scaleX(0.9091)">4</div>
<svg style="left:1803px;top:724.5px" width="24" height="19" viewBox="0 0 24 19"><path d="M1.1 14.2 L1.1 1.2 L14.5 1.2 L14.5 14.2 Z" fill="none" stroke="#2594d8" stroke-width="1.7" stroke-linejoin="round"/><path d="M14.2 1.3 L15.8 3.4 L22.8 8.2 L22.8 15 L14.2 15 Z" fill="#129cda"/><path d="M15.9 5.2 L19.8 8.8 L15.9 8.8 Z" fill="#e8f4fb"/><circle cx="5.8" cy="15.3" r="2.5" fill="#f4f4f4" stroke="#2594d8" stroke-width="1.6"/><circle cx="17.8" cy="15.3" r="2.5" fill="#f4f4f4" stroke="#2594d8" stroke-width="1.6"/></svg>
<div class="t" style="left:1900.07px;top:723.73px;transform-origin:0 0;font-size:18.37px;transform:scaleX(0.9258)">(2) 24-04-2023</div>
<svg style="left:2082px;top:724.5px" width="24" height="19" viewBox="0 0 24 19"><path d="M1.1 14.2 L1.1 1.2 L14.5 1.2 L14.5 14.2 Z" fill="none" stroke="#2594d8" stroke-width="1.7" stroke-linejoin="round"/><path d="M14.2 1.3 L15.8 3.4 L22.8 8.2 L22.8 15 L14.2 15 Z" fill="#129cda"/><path d="M15.9 5.2 L19.8 8.8 L15.9 8.8 Z" fill="#e8f4fb"/><circle cx="5.8" cy="15.3" r="2.5" fill="#f4f4f4" stroke="#2594d8" stroke-width="1.6"/><circle cx="17.8" cy="15.3" r="2.5" fill="#f4f4f4" stroke="#2594d8" stroke-width="1.6"/></svg>
<div class="t" style="left:190.69px;top:752.73px;transform-origin:0 0;font-size:18.37px;transform:scaleX(0.9091)">2</div>
<div class="t" style="left:290.83px;top:752.73px;transform-origin:0 0;font-size:18.37px;transform:scaleX(0.9653)">Blok 2</div>
<div class="t" style="left:798.20px;top:752.73px;transform-origin:0 0;font-size:18.37px;transform:scaleX(0.7300)">Ja</div>
<div class="t" style="right:1451.74px;top:752.73px;transform-origin:100% 0;font-size:18.37px;transform:scaleX(0.9273)">ma 15-05-2023 (20)</div>
<svg style="left:1197px;top:752px" width="24" height="24" viewBox="0 0 24 24"><rect x="1.2" y="1.2" width="21.6" height="21.6" fill="#fdfdfd" stroke="#d2d2d2" stroke-width="1.5"/><path d="M5 19.5 L10 14.5" stroke="#d4903e" stroke-width="2.6" stroke-linecap="round"/><circle cx="14.8" cy="8.6" r="5.6" fill="#d6eef9" stroke="#7d98ad" stroke-width="1.3"/></svg>
<div class="t" style="right:1136.30px;top:752.73px;transform-origin:100% 0;font-size:18.37px;transform:scaleX(0.9091)">0</div>
<svg style="left:1803px;top:753.5px" width="24" height="19" viewBox="0 0 24 19"><path d="M1.1 14.2 L1.1 1.2 L14.5 1.2 L14.5 14.2 Z" fill="none" stroke="#2594d8" stroke-width="1.7" stroke-linejoin="round"/><path d="M14.2 1.3 L15.8 3.4 L22.8 8.2 L22.8 15 L14.2 15 Z" fill="#129cda"/><path d="M15.9 5.2 L19.8 8.8 L15.9 8.8 Z" fill="#e8f4fb"/><circle cx="5.8" cy="15.3" r="2.5" fill="#f4f4f4" stroke="#2594d8" stroke-width="1.6"/><circle cx="17.8" cy="15.3" r="2.5" fill="#f4f4f4" stroke="#2594d8" stroke-width="1.6"/></svg>
<div class="t" style="left:1901.00px;top:752.73px;transform-origin:0 0;font-size:18.37px;transform:scaleX(0.9091)">0</div>
<svg style="left:2082px;top:753.5px" width="24" height="19" viewBox="0 0 24 19"><path d="M1.1 14.2 L1.1 1.2 L14.5 1.2 L14.5 14.2 Z" fill="none" stroke="#2594d8" stroke-width="1.7" stroke-linejoin="round"/><path d="M14.2 1.3 L15.8 3.4 L22.8 8.2 L22.8 15 L14.2 15 Z" fill="#129cda"/><path d="M15.9 5.2 L19.8 8.8 L15.9 8.8 Z" fill="#e8f4fb"/><circle cx="5.8" cy="15.3" r="2.5" fill="#f4f4f4" stroke="#2594d8" stroke-width="1.6"/><circle cx="17.8" cy="15.3" r="2.5" fill="#f4f4f4" stroke="#2594d8" stroke-width="1.6"/></svg>
<div class="t" style="left:73.57px;top:780.73px;transform-origin:0 0;font-size:18.37px;transform:scaleX(0.9273)">Stadskanaal</div>
<div class="t" style="left:190.69px;top:780.73px;transform-origin:0 0;font-size:18.37px;transform:scaleX(0.9091)">1</div>
<div class="t" style="left:290.85px;top:780.73px;transform-origin:0 0;font-size:18.37px;transform:scaleX(0.9510)">Blok 1</div>
<div class="t" style="left:655.13px;top:780.73px;transform-origin:0 0;font-size:18.37px;transform:scaleX(0.8730)">5, 6, 7, 8,</div>
<div class="t" style="right:1451.74px;top:780.73px;transform-origin:100% 0;font-size:18.37px;transform:scaleX(0.9273)">ma 05-08-2024 (32)</div>
<svg style="left:1197px;top:780px" width="24" height="24" viewBox="0 0 24 24"><rect x="1.2" y="1.2" width="21.6" height="21.6" fill="#fdfdfd" stroke="#d2d2d2" stroke-width="1.5"/><path d="M5 19.5 L10 14.5" stroke="#d4903e" stroke-width="2.6" stroke-linecap="round"/><circle cx="14.8" cy="8.6" r="5.6" fill="#d6eef9" stroke="#7d98ad" stroke-width="1.3"/></svg>
<div class="t" style="right:1136.30px;top:780.73px;transform-origin:100% 0;font-size:18.37px;transform:scaleX(0.9091)">2</div>
<svg style="left:1803px;top:781.5px" width="24" height="19" viewBox="0 0 24 19"><path d="M1.1 14.2 L1.1 1.2 L14.5 1.2 L14.5 14.2 Z" fill="none" stroke="#2594d8" stroke-width="1.7" stroke-linejoin="round"/><path d="M14.2 1.3 L15.8 3.4 L22.8 8.2 L22.8 15 L14.2 15 Z" fill="#129cda"/><path d="M15.9 5.2 L19.8 8.8 L15.9 8.8 Z" fill="#e8f4fb"/><circle cx="5.8" cy="15.3" r="2.5" fill="#f4f4f4" stroke="#2594d8" stroke-width="1.6"/><circle cx="17.8" cy="15.3" r="2.5" fill="#f4f4f4" stroke="#2594d8" stroke-width="1.6"/></svg>
<div class="t" style="left:1901.00px;top:780.73px;transform-origin:0 0;font-size:18.37px;transform:scaleX(0.9011)">05-08-2024</div>
<svg style="left:2082px;top:781.5px" width="24" height="19" viewBox="0 0 24 19"><path d="M1.1 14.2 L1.1 1.2 L14.5 1.2 L14.5 14.2 Z" fill="none" stroke="#2594d8" stroke-width="1.7" stroke-linejoin="round"/><path d="M14.2 1.3 L15.8 3.4 L22.8 8.2 L22.8 15 L14.2 15 Z" fill="#129cda"/><path d="M15.9 5.2 L19.8 8.8 L15.9 8.8 Z" fill="#e8f4fb"/><circle cx="5.8" cy="15.3" r="2.5" fill="#f4f4f4" stroke="#2594d8" stroke-width="1.6"/><circle cx="17.8" cy="15.3" r="2.5" fill="#f4f4f4" stroke="#2594d8" stroke-width="1.6"/></svg>
<svg style="left:17px;top:1419px" width="20" height="19" viewBox="0 0 20 19"><path d="M10 1.8 L18.8 17.2 L1.2 17.2 Z" fill="none" stroke="#f5862b" stroke-width="2" stroke-linejoin="round"/><path d="M10 7 L10 12.3" stroke="#bbb" stroke-width="1.6"/><circle cx="10" cy="14.6" r="0.9" fill="#bbb"/></svg>
<div class="t" style="left:43.69px;top:1419.65px;transform-origin:0 0;font-size:18.33px;transform:scaleX(0.9101);color:#f5862b">Er zijn boekingsregels vóór het begin van deze Werkorder: 16097, 16084, 16086, 16088, 16090, 16092, 16094, 16096</div>
<div class="a" style="left:1px;top:1447px;width:2558px;height:48px;background:#f3f8fc;"></div>
<div class="a" style="left:1px;top:1496px;width:2558px;height:32px;background:#f3f8fc;"></div>
<div class="a" style="left:6px;top:1452px;width:111px;height:38px;border:1px solid #ebf0f4;background:#f3f8fc"></div>
<div class="a" style="left:247px;top:1452px;width:112px;height:38px;border:1px solid #ebf0f4;background:#f3f8fc"></div>
<div class="a" style="left:126px;top:1451px;width:112px;height:40px;border:1px solid #a5a5a5;background:#fdfdfd"></div>
<div class="t" style="left:27.69px;top:1461.27px;transform-origin:0 0;font-size:19.14px;transform:scaleX(0.9087);color:#3c3c3c">Opslaan</div>
<div class="t" style="left:162.89px;top:1460.97px;transform-origin:0 0;font-size:19.14px;transform:scaleX(0.9135)">Sluit</div>
<div class="t" style="left:261.00px;top:1461.48px;transform-origin:0 0;font-size:18.54px;transform:scaleX(0.9157);color:#3c3c3c">Toepassen</div>
<svg style="left:6.5px;top:1500.5px" width="15" height="20" viewBox="0 0 15 20"><path d="M1 1 L9 1 L14 6 L14 19 L1 19 Z" fill="#fff" stroke="#2a93d6" stroke-width="1.6" stroke-linejoin="round"/><path d="M9 1 L9 6 L14 6" fill="none" stroke="#2a93d6" stroke-width="1.4"/></svg>
<svg style="left:227px;top:1500.5px" width="15" height="20" viewBox="0 0 15 20"><path d="M1 1 L9 1 L14 6 L14 19 L1 19 Z" fill="#fff" stroke="#2a93d6" stroke-width="1.6" stroke-linejoin="round"/><path d="M9 1 L9 6 L14 6" fill="none" stroke="#2a93d6" stroke-width="1.4"/><path d="M4 10.5 L11 10.5 M4 13 L11 13 M4 15.5 L11 15.5" stroke="#2a93d6" stroke-width="1.2"/></svg>
<div class="t" style="left:30.18px;top:1503.05px;transform-origin:0 0;font-size:18.33px;transform:scaleX(0.9158);color:#555;text-decoration:underline;text-underline-offset:2px">KP ma 06-02-2023 13:56</div>
<div class="t" style="left:251.08px;top:1503.08px;transform-origin:0 0;font-size:18.24px;transform:scaleX(0.9151);color:#555;text-decoration:underline;text-underline-offset:2px">KP vr 07-06-2024 13:56</div>
<svg style="left:0px;top:0px" width="1" height="1" viewBox="0 0 1 1"><path d="M2418.9 1508.5 A6.5 6.5 0 1 1 2422.6 1513.8 L2419.5 1514.8 L2419.5 1516.2 L2416.3 1516.8 L2416.3 1519.8 L2412.7 1519.8 L2412.7 1515 Z" fill="none" stroke="#2196d8" stroke-width="1.8" stroke-linejoin="round"/><circle cx="2425.6" cy="1506.5" r="1.1" fill="#2196d8"/></svg>
<div class="t" style="left:2441.20px;top:1503.40px;transform-origin:0 0;font-size:17.89px;transform:scaleX(0.9160);color:#555">Ac: 3.121</div>
<svg style="left:2526px;top:1511.4px" width="8" height="5" viewBox="0 0 8 5"><path d="M0 0 L8 0 L4 4.6 Z" fill="#111"/></svg>
<svg style="left:2539.7px;top:1509px" width="15" height="15" viewBox="0 0 15 15"><rect x="12" y="0" width="3" height="3" fill="#a0a0a0"/><rect x="12" y="6" width="3" height="3" fill="#a0a0a0"/><rect x="12" y="12" width="3" height="3" fill="#a0a0a0"/><rect x="6" y="6" width="3" height="3" fill="#a0a0a0"/><rect x="6" y="12" width="3" height="3" fill="#a0a0a0"/><rect x="0" y="12" width="3" height="3" fill="#a0a0a0"/></svg>
</body></html>
